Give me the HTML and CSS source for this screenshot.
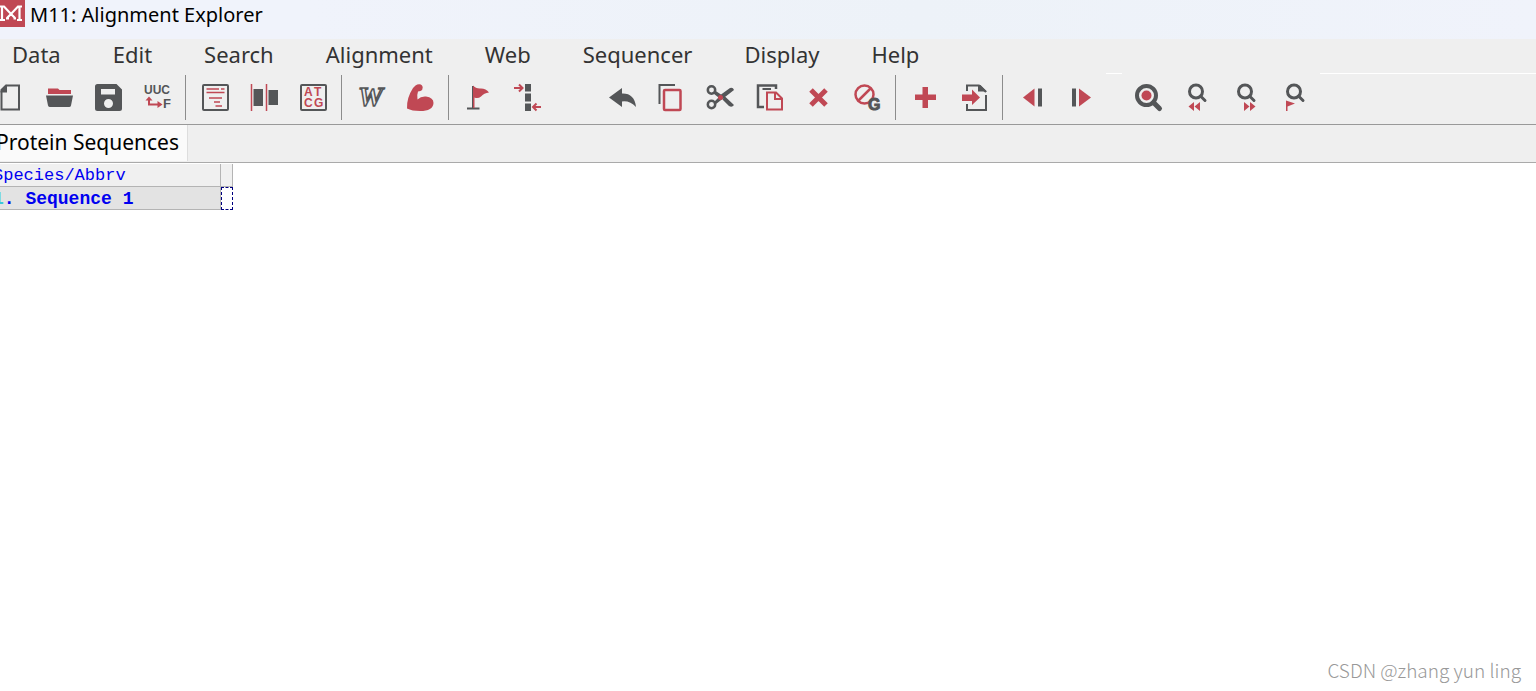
FILE: index.html
```html
<!DOCTYPE html>
<html lang="en">
<head>
    <meta charset="UTF-8">
    <meta name="viewport" content="width=device-width, initial-scale=1.0">
    <title>M11: Alignment Explorer</title>
    <link rel="stylesheet" href="styles.css">
</head>
<body>
    <header class="titlebar">
        <svg class="logo" viewBox="0 0 25 27" aria-hidden="true">
            <rect class="fill-red" width="25" height="27"/>
            <path d="M0 6.5H4L11 14L18 6.5H22M2 6.5V20M0 20H5M19.5 6.5V20M17 20H22M7 18L11 14L15 18M6 18.5H9M13.5 18.5H16" fill="none" stroke="#fff" stroke-width="2.2"/>
        </svg>
        <h1>M11: Alignment Explorer</h1>
    </header>

    <nav class="menubar">
        <button type="button">Data</button>
        <button type="button">Edit</button>
        <button type="button">Search</button>
        <button type="button">Alignment</button>
        <button type="button">Web</button>
        <button type="button">Sequencer</button>
        <button type="button">Display</button>
        <button type="button">Help</button>
    </nav>
    <div class="menu-edge"><span></span><span></span></div>

    <div class="toolbar" role="toolbar" aria-label="Alignment tools">
        <button type="button" aria-label="New">
            <svg viewBox="0 0 27 27"><path class="line-dark" d="M9 1.5H22V25.5H4.5V6Z"/><path class="fill-dark" d="M3.5 7L10 .5V8.5H3.5Z"/></svg>
        </button>
        <button type="button" aria-label="Open">
            <svg viewBox="0 0 27 27"><path class="fill-red" d="M2 4.5H12L13.5 6H25V10H2Z"/><path class="fill-dark" d="M0 11.5H27L25 21.5Q24.7 23 23 23H4Q2.5 23 2 21.5Z"/></svg>
        </button>
        <button type="button" aria-label="Save">
            <svg viewBox="0 0 27 27"><path class="fill-dark" fill-rule="evenodd" d="M2.5 0H21.5L27 5.5V24.5Q27 27 24.5 27H2.5Q0 27 0 24.5V2.5Q0 0 2.5 0ZM6 5V10.5H20V5ZM13.5 15A4.5 4.5 0 1 0 13.5 24A4.5 4.5 0 1 0 13.5 15Z"/></svg>
        </button>
        <button type="button" aria-label="Translate">
            <svg viewBox="0 0 27 27"><text class="label-dark" x="0" y="10" font-size="12">UUC</text><text class="label-dark" x="19" y="24" font-size="13">F</text><path class="line-red" d="M5 15V20.5H14"/><path class="fill-red" d="M1.5 16.5L5 12.5L8.5 16.5ZM13.5 17L18.5 20.5L13.5 24Z"/></svg>
        </button>
        <span class="separator"></span>
        <button type="button" aria-label="Sequence text">
            <svg viewBox="0 0 27 27"><rect class="line-dark" x="1" y="1" width="25" height="25" rx="1"/><path class="line-red thin" d="M4.5 5H17M19 5H22.5M4.5 8.5H22.5M7 14H20M12 18H18M13.5 22H20"/></svg>
        </button>
        <button type="button" aria-label="Align columns">
            <svg viewBox="0 0 27 27"><path class="line-red thin" d="M.5 0V27M15.5 0V27"/><path class="fill-dark" d="M2.5 5H12V22H2.5ZM17.5 6H27V21H17.5Z"/></svg>
        </button>
        <button type="button" aria-label="Show bases">
            <svg viewBox="0 0 27 27"><rect class="line-dark" x="1" y="1" width="25" height="25" rx="1"/><text class="label-red" x="4" y="12" font-size="12">A</text><text class="label-red" x="14" y="12" font-size="12">T</text><text class="label-red" x="4" y="23" font-size="12">C</text><text class="label-red" x="14" y="23" font-size="12">G</text></svg>
        </button>
        <span class="separator"></span>
        <button type="button" aria-label="Align by ClustalW">
            <svg viewBox="0 0 27 27"><text class="clustal" x="0" y="22" font-size="28">W</text></svg>
        </button>
        <button type="button" aria-label="Align by Muscle">
            <svg viewBox="0 0 27 27"><path class="fill-red" d="M8.5 1.5Q10.5 0 12.5 .2Q15.5 .5 15.7 3.5Q15.7 6.5 13.5 7L11 7.5Q9.7 11 10.5 15.5Q14 12 19 12.5Q26.5 13.5 26.5 19Q26 27 13 27Q5 27 0 24.5Q-.5 14 6 4Z"/></svg>
        </button>
        <span class="separator"></span>
        <button type="button" aria-label="Mark site">
            <svg viewBox="0 0 27 27"><path class="line-dark" d="M2 24.5H14.5M8 2V24"/><path class="fill-red" d="M8 1.5Q11 5 16 4.5Q21 4.5 24 8.5Q19 9 16 12.5Q13 15 9.5 13.5V24H8Z"/></svg>
        </button>
        <button type="button" aria-label="Align marked sites">
            <svg viewBox="0 0 27 27"><path class="fill-dark" d="M11 0H17V7.5H11ZM11 9.5H17V17.5H11ZM11 19.5H17V27H11Z"/><path class="line-red" d="M0 4H8M5 .5L8.5 4L5 7.5M27 23H19.5M22.5 19.5L19 23L22.5 26.5"/></svg>
        </button>
        <span class="gap-wide"></span>
        <button type="button" aria-label="Undo">
            <svg viewBox="0 0 27 27"><path class="fill-dark" d="M0 13.5L13 4V9.5Q25.5 9 27 23Q21 16.5 13 17.5V23Z"/></svg>
        </button>
        <button type="button" aria-label="Copy">
            <svg viewBox="0 0 27 27"><path class="line-dark" d="M1.5 20V1H17"/><rect class="line-red thick" x="6" y="6" width="16.5" height="20" rx="1"/></svg>
        </button>
        <button type="button" aria-label="Cut">
            <svg viewBox="0 0 27 27"><circle class="line-dark thick" cx="4.5" cy="6" r="3.7"/><circle class="line-dark thick" cx="4.5" cy="20.5" r="3.7"/><path class="fill-dark" d="M8 6.5L14 10.5L23 4Q26 3 27 6L9 20L7 18L11.5 13.5L6.5 9.5ZM15.5 15.5L18 12.5L27 21Q25 24 22 22Z"/><circle class="fill-red" cx="13.5" cy="13.5" r="2.5"/></svg>
        </button>
        <button type="button" aria-label="Paste">
            <svg viewBox="0 0 27 27"><path class="line-dark thick" d="M8 23H2V1.5H20V5"/><path class="line-dark" d="M6.5 5H15"/><path class="line-red" d="M11 8.5H20L26 14.5V25.5H11ZM19 9V15H25.5"/></svg>
        </button>
        <button type="button" aria-label="Delete">
            <svg viewBox="0 0 27 27"><path class="cross" d="M6 6L21 21M21 6L6 21"/></svg>
        </button>
        <button type="button" aria-label="Delete gaps">
            <svg viewBox="0 0 27 27"><circle class="line-red thick" cx="10.5" cy="10.5" r="9"/><path class="line-red thick" d="M4 17L17 4"/><text class="label-dark heavy" x="14" y="26" font-size="16">G</text></svg>
        </button>
        <span class="separator"></span>
        <button type="button" aria-label="Insert sequence">
            <svg viewBox="0 0 27 27"><path class="fill-red" d="M10.5 3H16V10.5H24V16H16V24H10.5V16H3V10.5H10.5Z"/></svg>
        </button>
        <button type="button" aria-label="Insert from file">
            <svg viewBox="0 0 27 27"><path class="line-dark" d="M6 7V1.5H18L25 8M25 11V26H6V20"/><path class="fill-dark" d="M17 1H19.5L26 7.5H17Z"/><path class="fill-red" d="M1 10.5H11V5.5L19 13.5L11 21V17H1Z"/></svg>
        </button>
        <span class="separator"></span>
        <button type="button" aria-label="Previous">
            <svg viewBox="0 0 27 27"><path class="fill-red" d="M4 13.5L15.5 4.5V22.5Z"/><path class="fill-dark" d="M19 4.5H23V22.5H19Z"/></svg>
        </button>
        <button type="button" aria-label="Next">
            <svg viewBox="0 0 27 27"><path class="fill-dark" d="M4 4.5H8V22.5H4Z"/><path class="fill-red" d="M11 4.5L23 13.5L11 22.5Z"/></svg>
        </button>
        <span class="gap"></span>
        <button type="button" aria-label="Find motif">
            <svg viewBox="0 0 27 27"><circle class="lens-big" cx="11.5" cy="11.5" r="9.5"/><circle class="fill-red" cx="11.5" cy="11.5" r="5"/><path class="handle-big" d="M18.5 18.5L24.5 24.5"/></svg>
        </button>
        <button type="button" aria-label="Find previous">
            <svg viewBox="0 0 27 27"><circle class="lens" cx="12" cy="7.5" r="6.5"/><path class="lens" d="M16.5 12L21 16.5"/><path class="fill-red" d="M4.5 22.5L10 18V27ZM10.5 22.5L16 18V27Z"/></svg>
        </button>
        <button type="button" aria-label="Find next">
            <svg viewBox="0 0 27 27"><circle class="lens" cx="12" cy="7.5" r="6.5"/><path class="lens" d="M16.5 12L21 16.5"/><path class="fill-red" d="M11 18L16.5 22.5L11 27ZM17 18L22.5 22.5L17 27Z"/></svg>
        </button>
        <button type="button" aria-label="Find marked">
            <svg viewBox="0 0 27 27"><circle class="lens" cx="12" cy="7.5" r="6.5"/><path class="lens" d="M16.5 12L21 16.5"/><path class="fill-red" d="M4 16.5L13 19.5L5.5 22.5V27H4Z"/></svg>
        </button>
    </div>

    <div class="tabs" role="tablist">
        <button type="button" class="tab" role="tab" aria-selected="true">Protein Sequences</button>
    </div>

    <main class="workspace">
        <table class="sequences">
            <thead>
                <tr><th class="name">Species/Abbrv</th><th class="site"></th></tr>
            </thead>
            <tbody>
                <tr><td class="name"><span class="index">1</span>. Sequence 1</td><td class="site active"></td></tr>
            </tbody>
        </table>
        <footer class="watermark">CSDN @zhang yun ling</footer>
    </main>
</body>
</html>
```

FILE: styles.css
```css
* {
    box-sizing: border-box;
}

body {
    display: flex;
    flex-direction: column;
    min-height: 100vh;
    margin: 0;
    overflow-x: hidden;
    background-color: #fff;
    color: #000;
    font-family: "Noto Sans", "Open Sans", sans-serif;
}

button {
    margin: 0;
    padding: 0;
    border: none;
    background: none;
    color: inherit;
    font: inherit;
}

.titlebar {
    display: flex;
    align-items: flex-start;
    gap: 5px;
    height: 39px;
    background: linear-gradient(90deg, #f0f3fb 20%, #edf2f8 60%, #f0f3fb);
}

.logo {
    width: 25px;
    height: 27px;
}

.titlebar h1 {
    margin: 0;
    font-size: 20px;
    font-weight: normal;
    line-height: 30px;
}

.menubar {
    display: flex;
    gap: 52px;
    height: 34px;
    padding-left: 12px;
    background-color: #efefef;
    color: #333;
    font-size: 22px;
    line-height: 30px;
}

.menubar button {
    height: 30px;
}

/* highlight under the menu, broken where the search tools sit */
.menu-edge {
    display: grid;
    grid-template-columns: 16px 1fr;
    gap: 198px;
    height: 1px;
    padding-left: 1106px;
    background-color: #efefef;
}

.menu-edge span {
    background-color: #fff;
}

.toolbar {
    display: flex;
    align-items: center;
    height: 51px;
    padding-bottom: 3px;
    border-bottom: 1px solid #999;
    margin-left: -14px;
    background-color: #efefef;
}

.toolbar button {
    display: flex;
    flex: none;
    justify-content: center;
    width: 49px;
}

.toolbar svg {
    width: 27px;
    height: 27px;
    overflow: visible;
}

.separator {
    flex: none;
    width: 1px;
    height: 45px;
    margin: 0 5px 0 3px;
    background-color: #8c8c8c;
}

.gap-wide {
    width: 46px;
}

.gap {
    width: 18px;
}

.fill-dark {
    fill: #545658;
}

.fill-red {
    fill: #c04854;
}

.line-dark,
.line-red {
    fill: none;
    stroke: #545658;
    stroke-width: 2;
}

.line-red {
    stroke: #c04854;
}

.thin {
    stroke-width: 1.5;
}

.thick {
    stroke-width: 2.5;
}

.cross {
    fill: none;
    stroke: #c04854;
    stroke-width: 5;
}

.lens,
.lens-big,
.handle-big {
    fill: none;
    stroke: #545658;
    stroke-width: 3;
    stroke-linecap: round;
}

.lens-big {
    stroke-width: 4;
}

.handle-big {
    stroke-width: 5;
}

.label-dark,
.label-red {
    fill: #545658;
    font-family: "Liberation Sans", sans-serif;
    font-weight: bold;
}

.label-red {
    fill: #c04854;
}

.heavy {
    stroke: #545658;
}

.clustal {
    fill: #efefef;
    stroke: #545658;
    stroke-width: 1.5;
    font-family: "Liberation Serif", serif;
    font-style: italic;
    font-weight: bold;
}

.tabs {
    display: flex;
    height: 38px;
    border-bottom: 1px solid #aaa;
    background-color: #efefef;
}

.tab {
    height: 36px;
    margin-left: -4px;
    padding: 0 8px 2px 0;
    border-right: 1px solid #ddd;
    background-color: #fafafa;
    font-size: 21px;
    line-height: 34px;
}

.workspace {
    display: flex;
    flex: 1;
    flex-direction: column;
    align-items: flex-start;
    justify-content: space-between;
    padding-top: 1px;
}

.sequences {
    margin-left: -7px;
    border-collapse: separate;
    border-spacing: 0;
    color: #0000f0;
    font-family: "Liberation Mono", monospace;
    font-size: 18px;
    line-height: 20px;
}

.sequences th,
.sequences td {
    height: 23px;
    padding: 0;
    border-right: 1px solid #b4b4b4;
    border-bottom: 1px solid #b4b4b4;
    text-align: left;
    vertical-align: bottom;
    white-space: pre;
}

.sequences th {
    background-color: #f0f0f0;
    font-size: 17px;
    font-weight: normal;
}

.sequences td {
    background-color: #e3e3e3;
    font-weight: bold;
}

.sequences .name {
    width: 228px;
}

.sequences .site {
    width: 12px;
}

.sequences .active {
    border: 1px dashed #000080;
    background-color: #fff;
}

.index {
    color: #3cc8d8;
}

.watermark {
    align-self: flex-end;
    padding: 0 15px 7px 0;
    color: #999;
    font-family: "Noto Sans CJK SC", sans-serif;
    font-size: 19px;
    font-weight: 300;
    line-height: 28px;
}
```
